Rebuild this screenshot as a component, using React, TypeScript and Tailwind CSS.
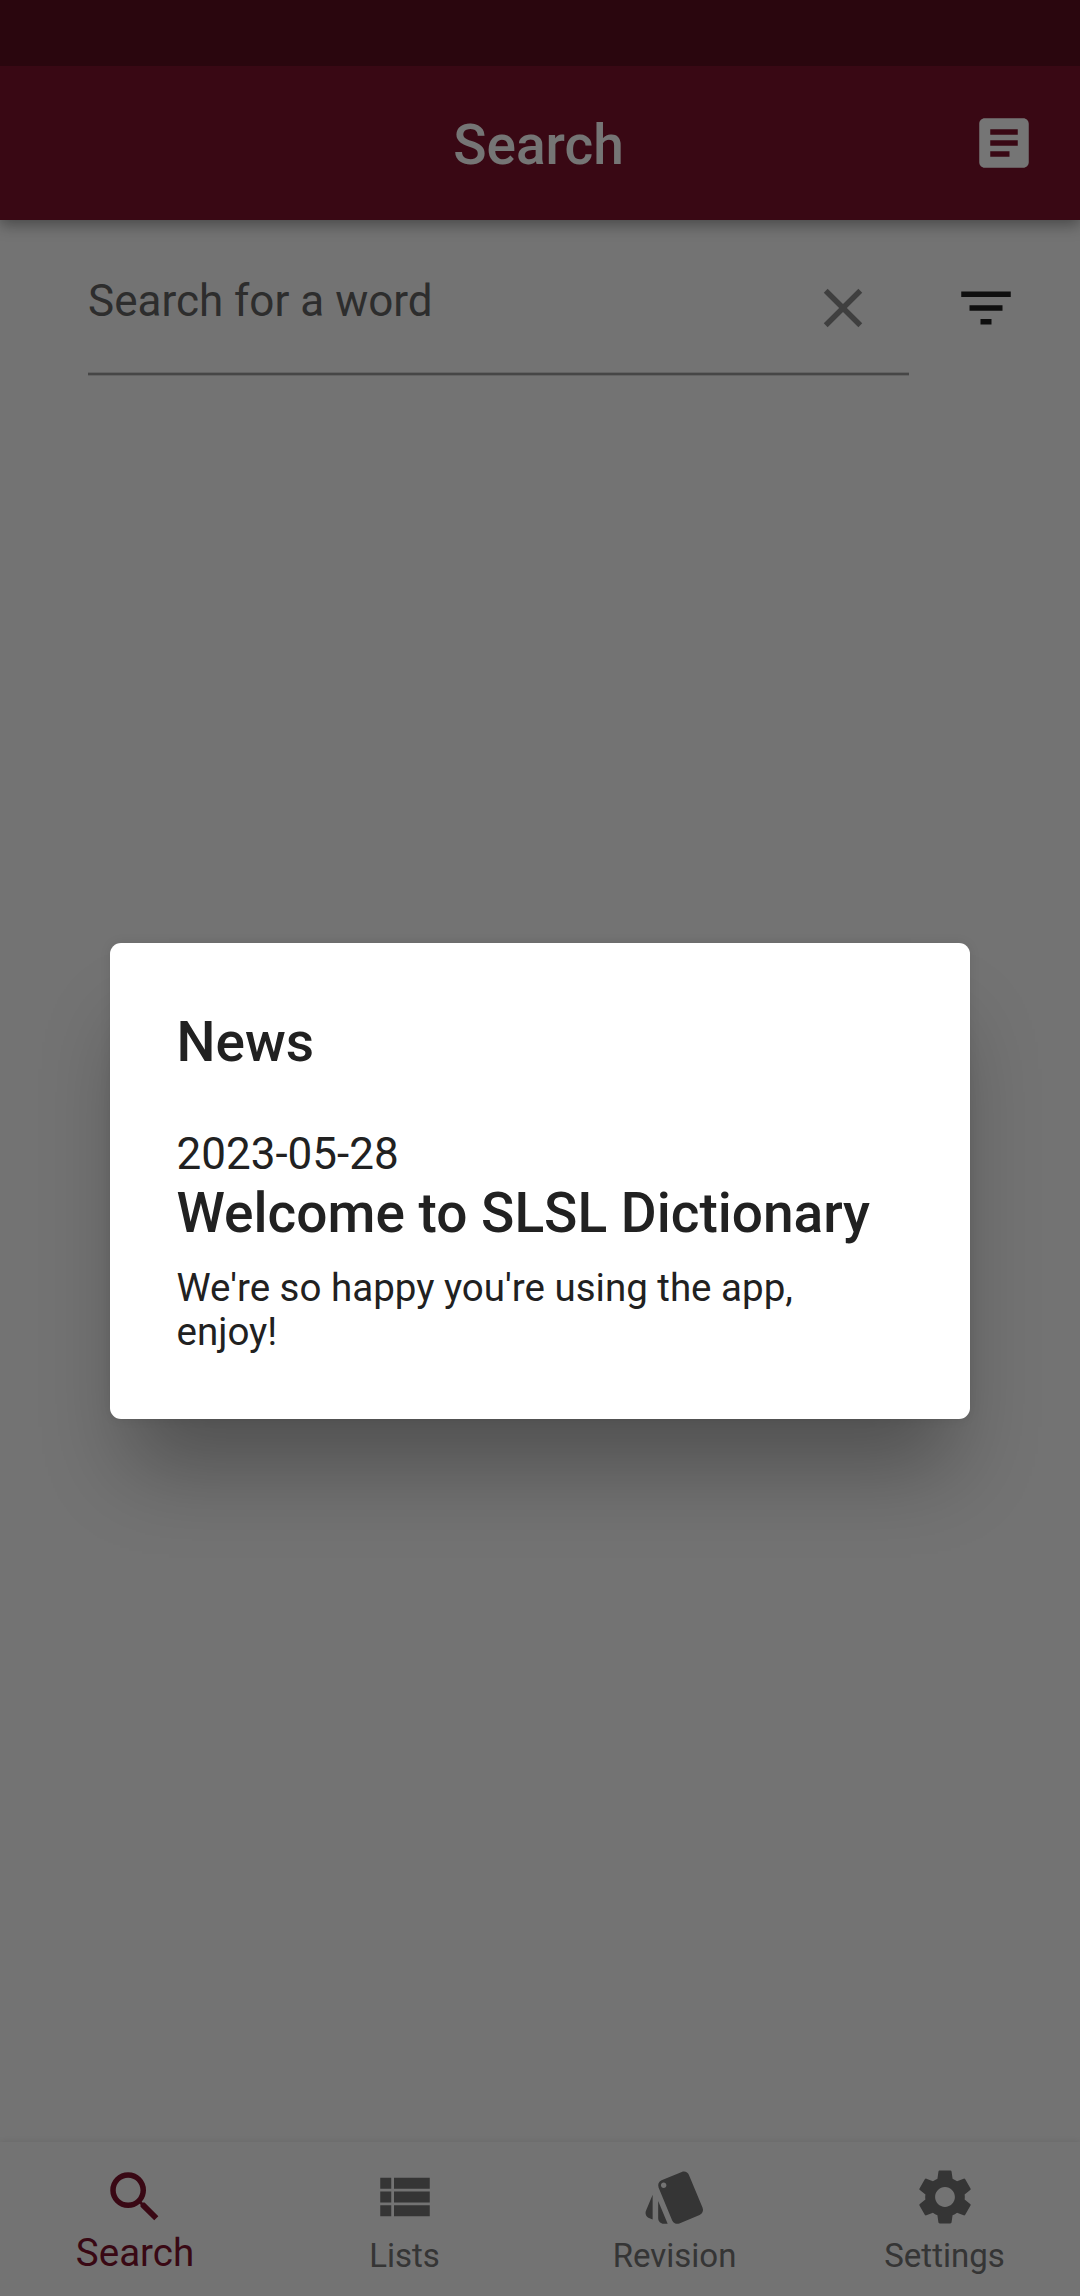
import type { ReactNode } from "react";
import { MdArticle, MdClose, MdFilterList, MdSearch, MdSettings, MdStyle } from "react-icons/md";

function ViewListIcon({ className }: { className?: string }) {
  return (
    <svg viewBox="0 0 24 24" fill="currentColor" className={className}>
      <path d="M3 14h4v-4H3v4zm0 5h4v-4H3v4zM3 9h4V5H3v4zm5 5h13v-4H8v4zm0 5h13v-4H8v4zM8 5v4h13V5H8z" />
    </svg>
  );
}

function Tab({ icon, label, active = false }: { icon: ReactNode; label: string; active?: boolean }) {
  return (
    <button
      className={
        active
          ? "flex flex-1 flex-col items-center pt-[22px] text-[#7c132c]"
          : "flex flex-1 flex-col items-center pt-[22px] text-[#737373]"
      }
    >
      {icon}
      <span className={active ? "text-[38.5px] leading-[46px]" : "mt-[6px] pr-[1px] text-[33px] leading-[40px]"}>
        {label}
      </span>
    </button>
  );
}

export default function App() {
  return (
    <div className="relative flex h-[2296px] w-[1080px] flex-col overflow-hidden bg-[#fafafa] font-['Roboto',sans-serif] text-[#212121]">
      <div className="z-20 h-[66px] bg-[#5d0f1f]" />
      <header className="z-10 grid h-[154px] shrink-0 grid-cols-[1fr_auto_1fr] items-center bg-[#7c132c] text-white shadow-[0_5px_14px_0_rgba(0,0,0,0.36)]">
        <span />
        <h1 className="pt-[3px] pr-[3px] text-[55px] leading-[64px] font-medium">Search</h1>
        <MdArticle className="mr-[43px] size-[66px] justify-self-end" />
      </header>

      <main className="flex flex-1 items-start pl-[88px]">
        <div className="w-[821px]">
          <div className="flex h-[152px] items-start">
            <span className="flex-1 pt-[55px] text-[44px] leading-[52px] text-[#636363]">Search for a word</span>
            <MdClose className="mt-[55px] mr-[33px] size-[66px] text-[#8a8a8a]" />
          </div>
          <div className="h-[4px] border-y border-[#d8d8d8] bg-[#989898]" />
        </div>
        <MdFilterList className="mt-[55px] ml-[44px] size-[66px]" />
      </main>

      <nav className="flex h-[154px] shrink-0 bg-[#fafafa] shadow-[0_0_6px_0_rgba(0,0,0,0.1)]">
        <Tab active label="Search" icon={<MdSearch className="size-[66px]" />} />
        <Tab label="Lists" icon={<ViewListIcon className="size-[66px]" />} />
        <Tab label="Revision" icon={<MdStyle className="size-[66px]" />} />
        <Tab label="Settings" icon={<MdSettings className="size-[66px]" />} />
      </nav>

      <div className="absolute inset-0 z-30 flex items-start justify-center bg-black/54 pt-[943px]">
        <section
          role="dialog"
          className="h-[476px] w-[860px] rounded-[11px] bg-white pt-[66px] pr-[80px] pl-[66.5px] shadow-[0_67px_80px_-19px_rgba(0,0,0,0.3),0_0_12px_0_rgba(0,0,0,0.08)]"
        >
          <h2 className="text-[55px] leading-[66px] font-medium">News</h2>
          <p className="mt-[53px] text-[44px] leading-[52px]">2023-05-28</p>
          <h3 className="pt-[1px] text-[55px] leading-[64px] font-medium">Welcome to SLSL Dictionary</h3>
          <p className="mt-[21px] text-[38.5px] leading-[44px]">We're so happy you're using the app, enjoy!</p>
        </section>
      </div>
    </div>
  );
}
